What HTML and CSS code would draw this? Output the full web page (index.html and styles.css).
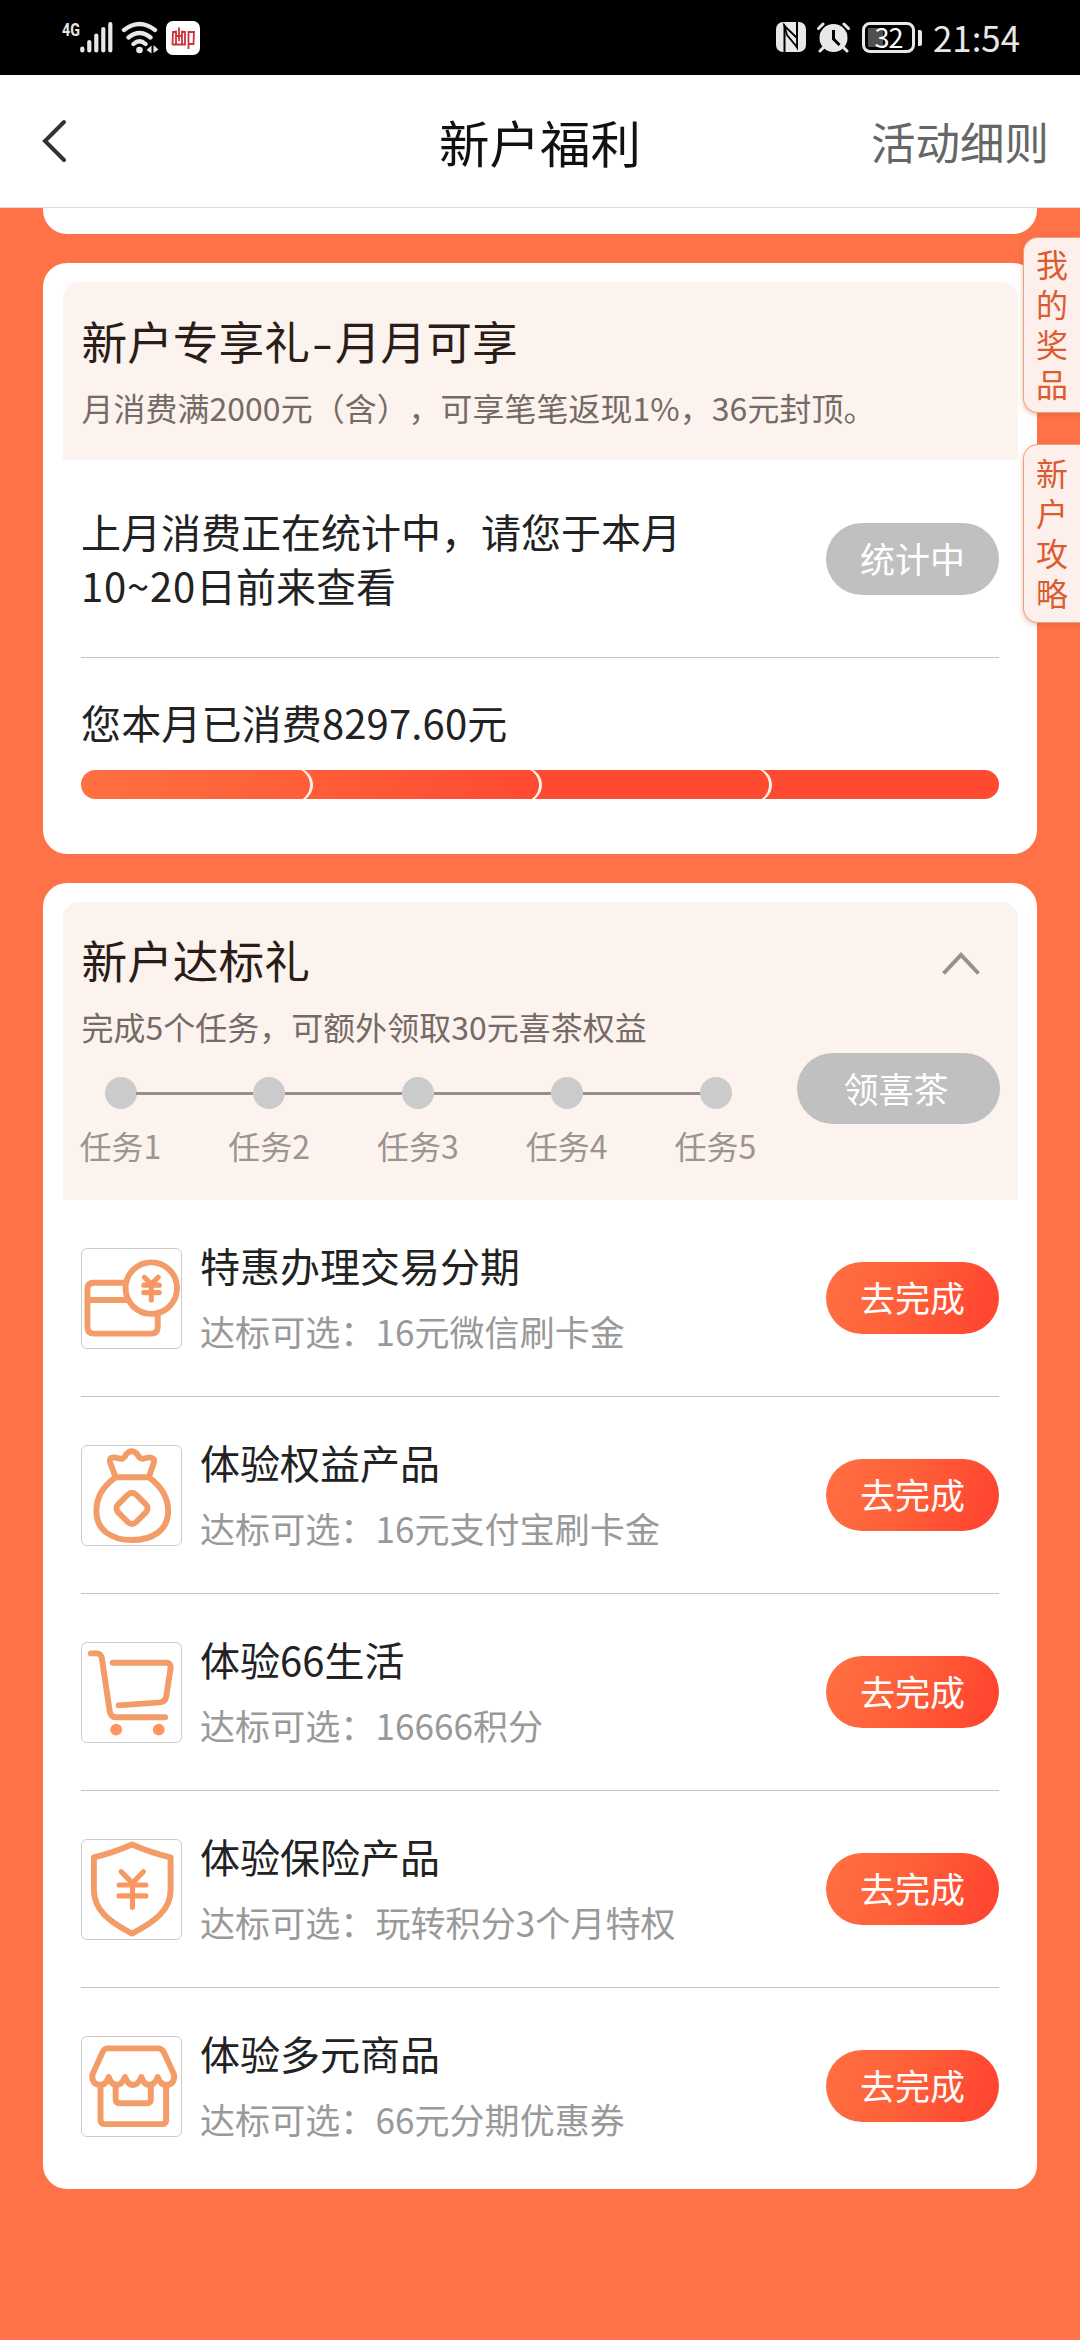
FILE: index.html
```html
<!DOCTYPE html>
<html lang="zh-CN">
<head>
<meta charset="utf-8">
<title>新户福利</title>
<link rel="stylesheet" href="styles.css">
</head>
<body>
<header class="status">
  <div class="status-left">
    <span class="net">4G</span>
    <svg class="signal" width="33" height="32" viewBox="0 0 33 32"><path d="M2.3 27.5v2M9.3 21v8.500M16.300 14.500v15M23.300 8v21.500M30.300 3v26.500"/></svg>
    <svg class="wifi" width="38" height="34" viewBox="0 0 38 34"><path d="M3 9Q18.500 -3 34 9M7.500 16.500Q18.500 7.500 29.500 16.500M12.500 23Q18.500 17.500 24.500 23"/><circle cx="18.500" cy="29" r="3.300"/><path class="solid" d="M25.500 29l5-4.500v8zM37.500 28.500l-5-4.500v8z"/></svg>
    <svg class="post" width="34" height="34" viewBox="0 0 34 34"><rect width="34" height="34" rx="7"/><path d="M6.500 24L7 11h3M16 11h3v12.500H6.500M13 6.500V20M10 9.500V23M16 9.500V23M10 15h6M22.500 28V11h5.500l-.5 12h-5"/></svg>
  </div>
  <div class="status-right">
    <svg width="30" height="30" viewBox="0 0 30 30"><rect width="30" height="30" rx="7" fill="#e8e8e8"/><path d="M8.500 30V4L21 25V0" fill="none" stroke="#000" stroke-width="2"/><path d="M8.500 4l12.500 12v9L11 13z" fill="#e8e8e8" stroke="#000" stroke-width="1.800"/></svg>
    <svg class="alarm" width="33" height="31" viewBox="0 0 33 31"><circle cx="16.500" cy="16" r="14" fill="#e8e8e8"/><path d="M1.500 6.500L6 2M27 2l4.500 4.500M6 26l-3 3M27 26l3 3" stroke="#e8e8e8" stroke-width="3" stroke-linecap="round"/><path d="M16.500 8v9l6 6" fill="none" stroke="#000" stroke-width="3"/></svg>
    <span class="battery">32</span><i class="nub"></i>
    <span class="clock">21:54</span>
  </div>
</header>
<nav class="bar">
  <svg class="back" width="26" height="44" viewBox="0 0 26 44"><path d="M22 3L3 22l19 19"/></svg>
  <h1>新户福利</h1>
  <a class="rules">活动细则</a>
</nav>
<main class="page">
  <section class="card stub"></section>

  <section class="card spend">
    <div class="panel">
      <h2>新户专享礼<span class="dash">-</span>月月可享</h2>
      <p class="note">月消费满2000元（含），可享笔笔返现1%，36元封顶。</p>
    </div>
    <div class="row">
      <p class="text">上月消费正在统计中，请您于本月<br><span class="dates">10~20</span>日前来查看</p>
      <button class="btn gray">统计中</button>
    </div>
    <p class="text amount">您本月已消费8297.60元</p>
    <div class="progress"><i></i><i></i><i></i><i></i></div>
  </section>

  <section class="card tasks">
    <div class="panel">
      <div class="head">
        <h2>新户达标礼</h2>
        <svg class="up" width="38" height="23" viewBox="0 0 38 23"><path d="M1.500 21.500L19 3l17.500 18.500"/></svg>
      </div>
      <p class="note">完成5个任务，可额外领取30元喜茶权益</p>
      <div class="foot">
        <ol class="steps"><li>任务1</li><li>任务2</li><li>任务3</li><li>任务4</li><li>任务5</li></ol>
        <button class="btn gray wide">领喜茶</button>
      </div>
    </div>
    <ul class="list">
      <li>
        <svg class="icon" viewBox="0 0 100 100"><path d="M43 34H12q-6.500 0-6.500 6.500v38q0 7 6.500 7h58q6.500 0 6.500-7V66M5.500 51.500H46"/><circle cx="70" cy="39.500" r="26"/><path class="yen" d="M63 28.500l7 7 7-7M62.500 36.500h15.500M62.500 44h15.500M70 36v15.500"/></svg>
        <div class="info"><h3>特惠办理交易分期</h3><p>达标可选：16元微信刷卡金</p></div>
        <button class="btn">去完成</button>
      </li>
      <li>
        <svg class="icon" viewBox="0 0 100 100"><path d="M34 31.500L28.500 17Q27 11 33 11.500Q38 13 40.500 13Q43 12 44.500 8.500Q50 2 56 8.500Q58 13 61 13Q65 12 68.500 11.500Q74 12 72.500 17L67.500 31.500ZM34 31.500C20 42 14.500 52 14.500 66C14.500 85 30 95 50.500 95S87 85 87 66C87 52 81 42 67.500 31.500"/><path d="M46 49.500q4.500-4.500 9 0l9 9q4.500 4.500 0 9l-9 9q-4.500 4.500-9 0l-9-9q-4.500-4.500 0-9z"/></svg>
        <div class="info"><h3>体验权益产品</h3><p>达标可选：16元支付宝刷卡金</p></div>
        <button class="btn">去完成</button>
      </li>
      <li>
        <svg class="icon" viewBox="0 0 100 100"><path d="M9 10.500h6q4 0 5 4.500l8 54q1 6 6 6h50M31 20h54q5 0 4.500 5.500l-4.500 29q-1 5-6 5.500L37 63"/><circle class="dot" cx="34.500" cy="87.500" r="6"/><circle class="dot" cx="77.500" cy="87.500" r="6"/></svg>
        <div class="info"><h3>体验66生活</h3><p>达标可选：16666积分</p></div>
        <button class="btn">去完成</button>
      </li>
      <li>
        <svg class="icon" viewBox="0 0 100 100"><path d="M50.500 4.500Q70 13 89.500 17.500V50C89.500 70 75 82 50.500 94.500C26 82 12 70 12 50V17.500Q31 13 50.500 4.500Z"/><path class="yen" d="M39.500 32L51 43.500 62 32M37.500 45.500h27M37.500 56.500h27M51 43v25"/></svg>
        <div class="info"><h3>体验保险产品</h3><p>达标可选：玩转积分3个月特权</p></div>
        <button class="btn">去完成</button>
      </li>
      <li>
        <svg class="icon" viewBox="0 0 100 100"><path d="M25 11.500h52q4 0 6 4.500l10 22q1 10-8 10.500-5.500 0-8.500-8-3.500 8-8.500 8t-8-8q-3.500 8-8.500 8t-8-8q-3.500 8-8.500 8t-8-8q-3 8-8.500 8-9-.5-8-10.500l10-22q2-4.500 4.500-4.500zM18.700 49v34.500q0 4.500 4.500 4.500h57.500q4.300 0 4.300-4.500V49M34 48v15q0 4 4 4h27.500q4 0 4-4V48"/></svg>
        <div class="info"><h3>体验多元商品</h3><p>达标可选：66元分期优惠券</p></div>
        <button class="btn">去完成</button>
      </li>
    </ul>
  </section>

  <aside class="tabs">
    <a>我的奖品</a>
    <a>新户攻略</a>
  </aside>
</main>
</body>
</html>
```
FILE: styles.css
```css
* { box-sizing: border-box; margin: 0; padding: 0; }
body {
  width: 1080px; height: 2340px; overflow: hidden;
  font-family: "Noto Sans CJK SC", sans-serif;
  text-spacing-trim: space-all;
  color: #222; background: #ff7248;
}
ul, ol { list-style: none; }
h1, h2, h3 { font-weight: 400; }
svg { display: block; flex: none; }

.status { height: 75px; background: #000; color: #e8e8e8; display: flex; justify-content: space-between; padding: 0 60px 0 62px; }
.status-left { display: flex; padding-top: 21px; }
.net { font: 700 19px/18px "Roboto", sans-serif; width: 18px; transform: scaleX(.75); transform-origin: 0 0; }
.signal { fill: none; stroke: #e8e8e8; stroke-width: 4.2; stroke-linecap: round; }
.wifi { margin-left: 8px; fill: #e8e8e8; }
.wifi path { fill: none; stroke: #e8e8e8; stroke-width: 4.300; stroke-linecap: round; }
.wifi .solid { fill: #e8e8e8; stroke: none; }
.post { margin-left: 7px; fill: #fff; }
.post path { fill: none; stroke: #c9343c; stroke-width: 1.8; }
.status-right { display: flex; align-items: flex-start; padding-top: 22px; }
.alarm { margin-left: 11px; }
.battery {
  margin-left: 12px; width: 53px; height: 31px; border: 3px solid #e8e8e8; border-radius: 8px;
  font: 27px/24px "Noto Sans CJK SC", sans-serif; text-align: center; letter-spacing: -1px; color: #fff;
  background: linear-gradient(90deg, #505050 15px, transparent 15px) 3px 3px / 40px 19px no-repeat;
}
.nub { width: 4px; height: 16px; margin: 8px 0 0 3px; background: #e8e8e8; border-radius: 0 2px 2px 0; }
.clock { margin-left: 11px; font: 34.800px/31px "Noto Sans CJK SC", sans-serif; }

.bar { height: 133px; background: #fff; border-bottom: 1px solid #ddd; display: grid; grid-template-columns: 1fr auto 1fr; align-items: center; padding: 0 31px 0 42px; }
.back { fill: none; stroke: #333; stroke-width: 4; stroke-linecap: round; }
.bar h1 { font-size: 50.500px; line-height: 60px; color: #111; margin-right: 11px; }
.rules { justify-self: end; font-size: 44.500px; line-height: 60px; color: #666; }

.page { position: relative; padding: 0 43px; }
.card { background: #fff; border-radius: 24px; }
.stub { height: 26px; border-radius: 0 0 24px 24px; margin-bottom: 29px; }
.spend { padding: 19px 19.500px 55px; margin-bottom: 29px; }
.panel { background: #fcf2ee; border-radius: 16px 16px 0 0; }
.spend .panel { height: 178px; padding: 28px 19px 0; }
h2 { font-size: 45.700px; line-height: 60px; color: #2a1d18; }
.dash { display: inline-block; width: 25px; text-align: center; transform: scaleX(1.35); }
.note { font-size: 31.900px; line-height: 40px; margin-top: 17px; letter-spacing: .1px; color: #756a65; white-space: nowrap; }
.row { height: 198px; margin: 0 18.500px; border-bottom: 1px solid #c4c4c4; display: flex; align-items: center; justify-content: space-between; }
.text { font-size: 40px; line-height: 53.300px; }
.dates { letter-spacing: .8px; }
.amount { margin: 38px 18.500px 21px; letter-spacing: .15px; }
.btn {
  width: 173px; height: 72px; flex: none; border: 0; border-radius: 36px; padding-bottom: 2px;
  font: 35px/40px "Noto Sans CJK SC", sans-serif; color: #fff;
  background: linear-gradient(110deg, #ff7043, #ff6039 45%, #ff4630 90%);
}
.gray { background: #c0c0c0; }
.wide { width: 203px; height: 71px; padding-right: 4px; }
.progress {
  display: flex; height: 29px; margin: 0 18.500px; border-radius: 15px; overflow: hidden; align-items: center;
  background: linear-gradient(100deg, #ff7042, #ff6039 22%, #ff4a32 50%);
}
.progress i { flex: 1; height: 34px; border-radius: 17px; box-shadow: 3px 0 0 #fff5e6; margin-left: -1px; margin-right: 1px; }
.progress i:last-child { box-shadow: none; }

.tasks { padding: 19px 0 4px; }
.tasks .panel { margin: 0 19.500px; height: 298px; padding: 27px 18px 0 19px; }
.head { display: flex; justify-content: space-between; align-items: center; }
.up { fill: none; stroke: #988e8b; stroke-width: 4; margin: 9px 20px 0 0; }
.foot { margin-top: 7px; display: flex; justify-content: space-between; align-items: flex-start; }
.steps { display: flex; justify-content: space-between; width: 677px; margin-left: -2px; padding-top: 24px; }
.steps li { position: relative; width: 82px; text-align: center; font-size: 32px; line-height: 40px; color: #9c948f; white-space: nowrap; }
.steps li::before { content: ""; display: block; width: 32px; height: 32px; margin: 0 auto 16px; border-radius: 50%; background: #cbcbcb; }
.steps li + li::after { content: ""; position: absolute; right: 57px; top: 15px; width: 117px; height: 3px; background: #988e8b; }

.list { margin: 0 38px; }
.list li { height: 197px; display: flex; align-items: center; border-bottom: 1px solid #c4c4c4; }
.list li:last-child { border-color: transparent; }
.icon { width: 101px; height: 101px; border: 1px solid #ccc; border-radius: 6px; fill: none; stroke: #f39c68; stroke-width: 6; stroke-linecap: round; stroke-linejoin: round; }
.icon .dot { fill: #fd9560; stroke: none; }
.icon .yen { stroke: #f99762; stroke-width: 5.200; }
.info { flex: 1; margin-left: 18px; display: grid; gap: 16px; }
h3 { font-size: 40px; line-height: 50px; }
.info p { font-size: 35px; line-height: 50px; letter-spacing: .08px; color: #999; }

.tabs { position: absolute; right: 0; top: 29px; display: grid; gap: 31px; }
.tabs a {
  width: 57px; height: 176px; padding: 5px 12px 0; border: 1.500px solid #e9a27c; border-right: 0; border-radius: 15px 0 0 15px;
  background: #fdf0ec; box-shadow: 0 2px 5px rgba(190, 80, 30, .35);
  font-size: 32px; line-height: 40px; color: #dc5b2f; word-break: break-all;
}
.tabs a + a { height: 179px; padding-top: 7px; }
```
